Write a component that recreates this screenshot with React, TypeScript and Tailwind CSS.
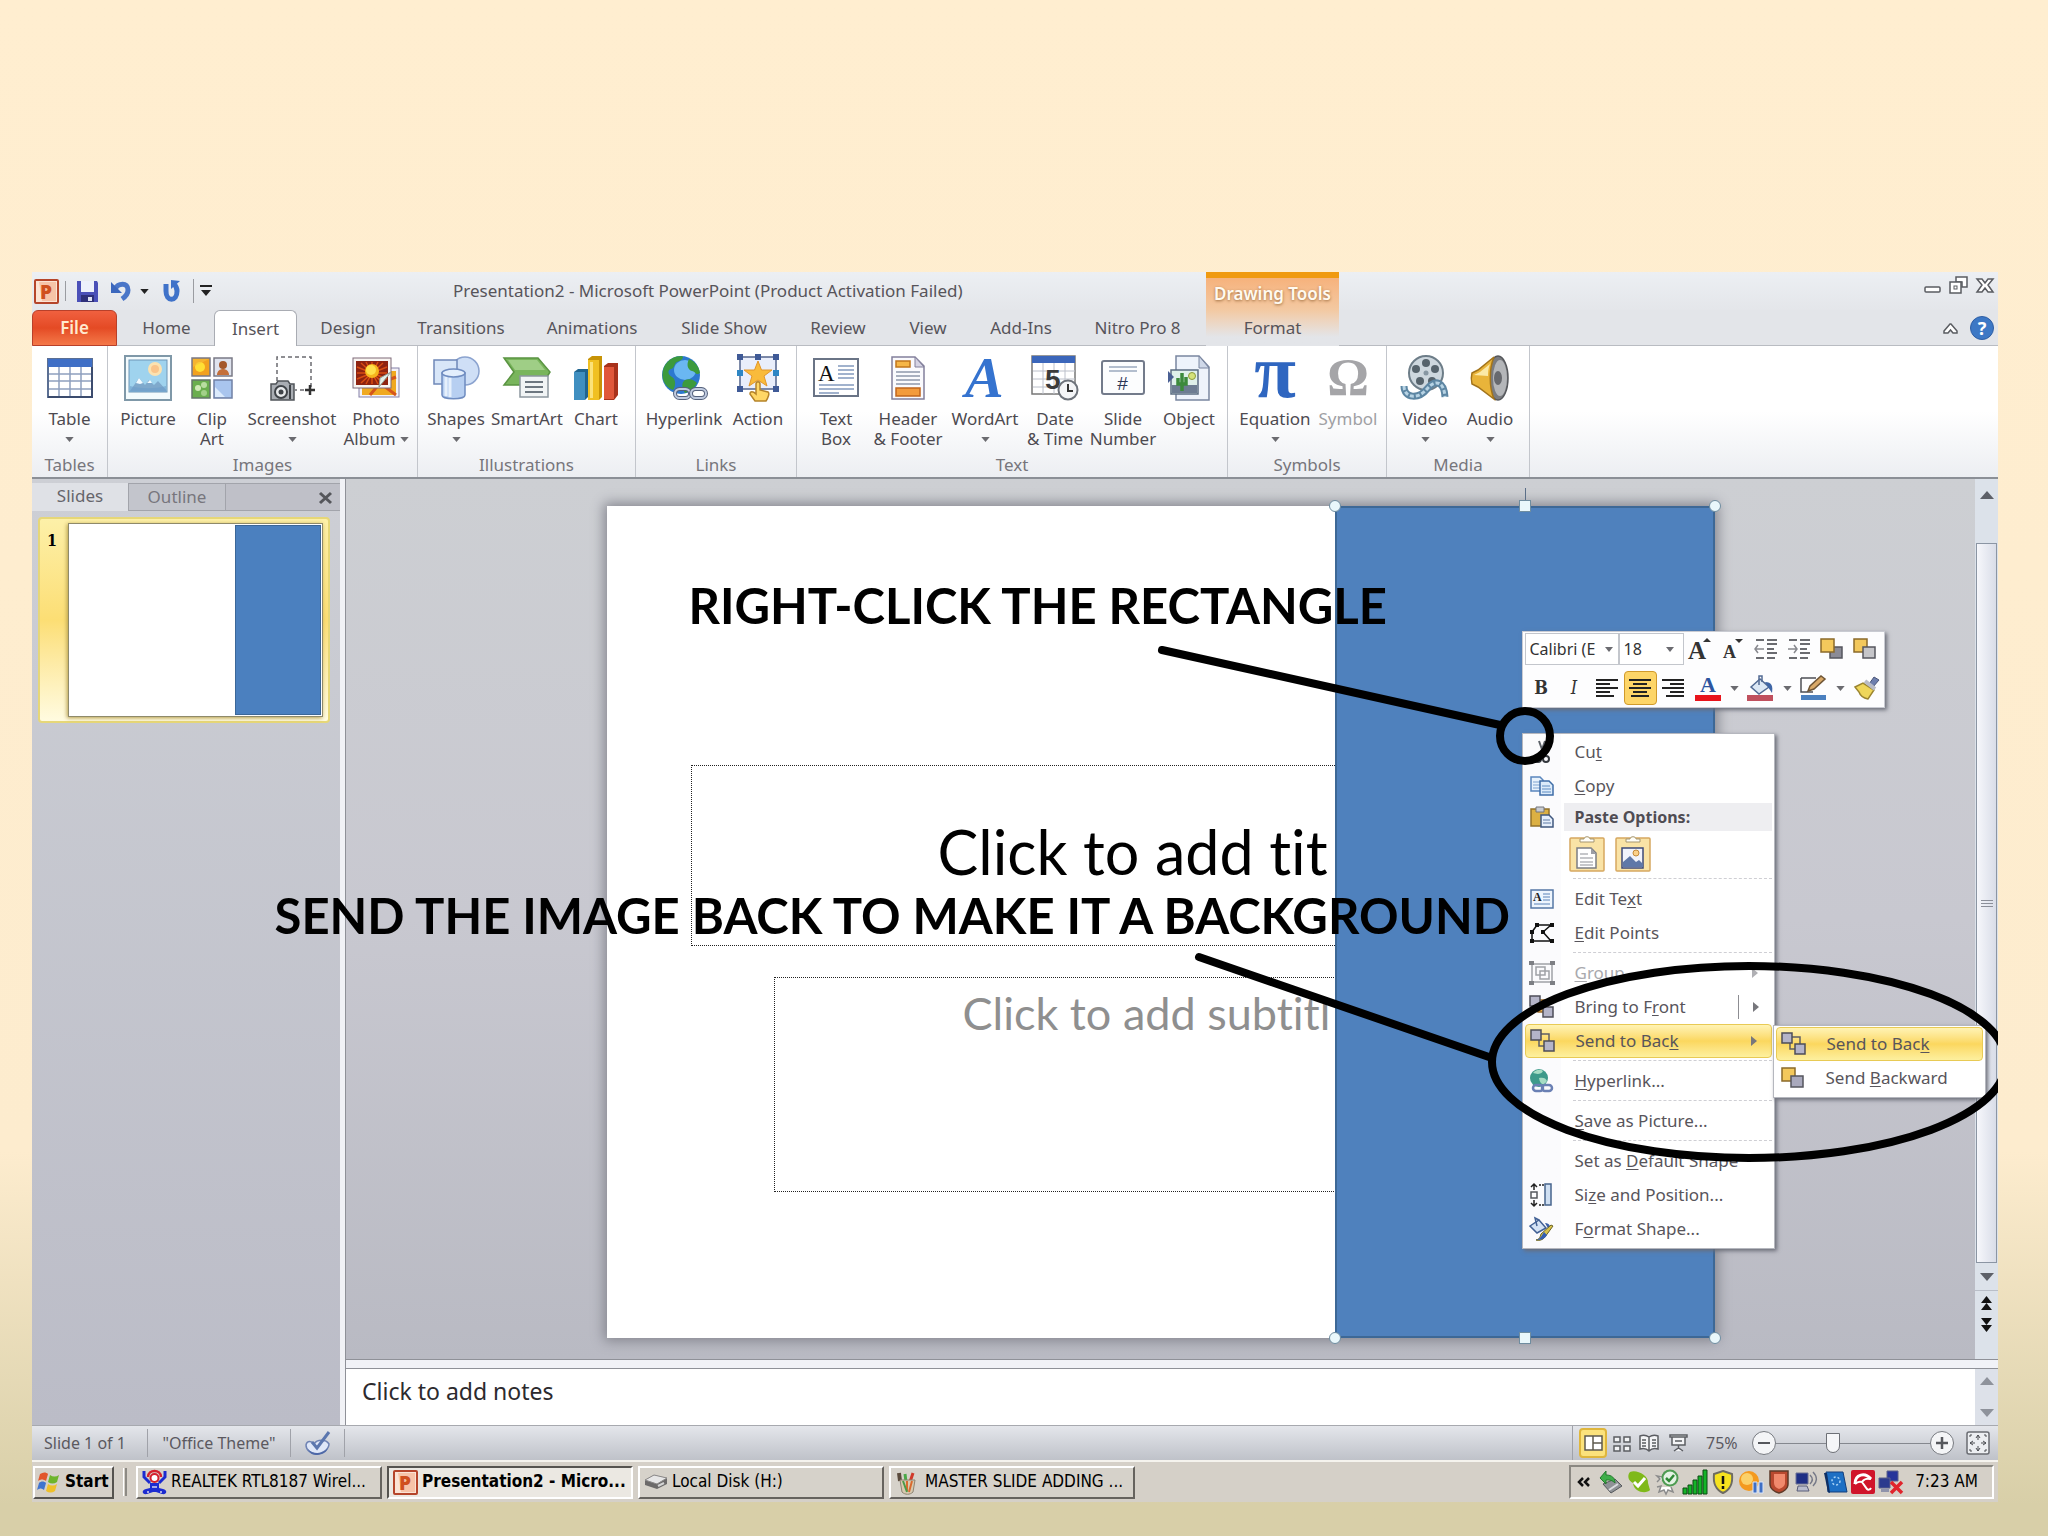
import React from "react";

type Kids = { children?: React.ReactNode };

function Icon({ w = 44, h, vw, vh, children }: Kids & { w?: number; h?: number; vw?: number; vh?: number }) {
  const hh = h ?? w;
  return (
    <svg width={w} height={hh} viewBox={`0 0 ${vw ?? w} ${vh ?? hh}`} aria-hidden="true" className="shrink-0 overflow-visible">
      {children}
    </svg>
  );
}

/** Label whose access key (the letter after "_") is underlined. */
function Keyed({ text }: { text: string }) {
  const i = text.indexOf("_");
  if (i < 0) return <span>{text}</span>;
  return (
    <span>
      {text.slice(0, i)}
      <span className="underline underline-offset-2">{text[i + 1]}</span>
      {text.slice(i + 2)}
    </span>
  );
}

function Down({ color = "#6b6b70", w = 9 }: { color?: string; w?: number }) {
  return (
    <svg width={w} height="5" viewBox="0 0 10 6" aria-hidden="true" className="shrink-0">
      <path d="M0 0h10L5 6z" fill={color} />
    </svg>
  );
}

/* ---------- large ribbon icons ---------- */

const TableIcon = (
  <Icon w={46} h={40}>
    <rect x="1" y="1" width="44" height="38" fill="#fff" stroke="#5b6f93" strokeWidth="2" />
    <rect x="1" y="1" width="44" height="8" fill="#3f6fc6" />
    <path d="M2 16h42M2 23h42M2 31h42M12 9v29M23 9v29M34 9v29" stroke="#8fa0bf" strokeWidth="1.5" />
    <path d="M1 39h44V9" fill="none" stroke="#3c4c6e" strokeWidth="2" />
  </Icon>
);
const PictureIcon = (
  <Icon w={48} h={46}>
    <rect x="1" y="1" width="46" height="44" fill="#f4fbfd" stroke="#7f98a8" strokeWidth="2" />
    <rect x="5" y="5" width="38" height="32" fill="#9fd3ee" stroke="#6f95b5" />
    <circle cx="31" cy="14" r="7" fill="#fbe2b0" />
    <circle cx="31" cy="14" r="4" fill="#f9c48a" />
    <path d="M6 36l9-13 6 7 4-5 5 5 4-4 9 10z" fill="#7fa9cc" />
    <path d="M12 28l3-5 4 5-3 1zM23 28l3-3 2 3z" fill="#f3fbff" />
    <path d="M6 37h36v-6c-12 3-24 3-36 0z" fill="#6d9fc9" opacity=".6" />
  </Icon>
);
const ClipArtIcon = (
  <Icon w={42} h={42}>
    <rect x="1" y="1" width="18" height="18" fill="#f2a11f" stroke="#7a7a86" strokeWidth="1.5" />
    <circle cx="9" cy="10" r="5" fill="#ffdf35" />
    <path d="M2 2h16L2 10z" fill="#f7c13c" opacity=".6" />
    <rect x="23" y="1" width="18" height="18" fill="#dfe3ee" stroke="#7a7a86" strokeWidth="1.5" />
    <circle cx="32" cy="8" r="4" fill="#a4572a" />
    <path d="M26 18c0-8 12-8 12 0z" fill="#c4703a" />
    <rect x="1" y="23" width="18" height="18" fill="#6aae4e" stroke="#64766a" strokeWidth="1.5" />
    <circle cx="7" cy="31" r="3" fill="#cfe9b6" />
    <circle cx="13" cy="28" r="3" fill="#b8dda0" />
    <circle cx="13" cy="36" r="3" fill="#a3d089" />
    <rect x="23" y="23" width="18" height="18" fill="#a9c5ee" stroke="#7080a5" strokeWidth="1.5" />
    <path d="M24 40V30l10 10z" fill="#dcebfc" />
  </Icon>
);
const ScreenshotIcon = (
  <Icon w={46} h={46}>
    <path d="M8 26V2h34v30M42 35H26" fill="none" stroke="#6b6b70" strokeWidth="1.5" strokeDasharray="4 3" />
    <path d="M36 35h10M41 30v10" stroke="#333" strokeWidth="2.5" />
    <path d="M2 29h5l2-3h10l2 3h4v16H2z" fill="#a9adb3" stroke="#505459" strokeWidth="1.5" />
    <circle cx="12" cy="37" r="6" fill="#e8eaec" stroke="#3f4348" strokeWidth="2" />
    <circle cx="12" cy="37" r="2.5" fill="#3f4348" />
    <path d="M21 30v14" stroke="#3f4348" strokeWidth="2" />
  </Icon>
);
const PhotoAlbumIcon = (
  <Icon w={48} h={42}>
    <rect x="7" y="11" width="40" height="29" fill="#f3f1f6" stroke="#8480a8" />
    <rect x="10" y="14" width="34" height="24" fill="#f0a920" />
    <path d="M18 38l10-12 16 12M28 26l16-6" stroke="#d5551b" strokeWidth="3" fill="none" />
    <rect x="1" y="1" width="38" height="30" fill="#f8f5f2" stroke="#7e6a78" />
    <rect x="4" y="4" width="32" height="24" fill="#8e2310" />
    <path d="M20 5v22M5 16h30M9 6l22 20M31 6L9 26M14 5l12 22M26 5L14 27M5 10l30 12M35 10L5 22" stroke="#d84c12" strokeWidth="1.5" />
    <circle cx="20" cy="14" r="7" fill="#f6b41c" />
    <circle cx="19" cy="13" r="5" fill="#ffe04a" />
    <path d="M39 15L27 30l1-9z" fill="#e4efe8" stroke="#8d9a94" />
  </Icon>
);
const ShapesIcon = (
  <Icon w={48} h={44}>
    <circle cx="33" cy="15" r="14" fill="#cfdff6" stroke="#8ba3cf" strokeWidth="1.5" />
    <rect x="2" y="4" width="23" height="24" fill="#d8e6f8" stroke="#6f88b8" strokeWidth="1.5" />
    <path d="M10 17v22c0 5 23 5 23 0V17z" fill="#b7cff1" stroke="#6f8cc0" strokeWidth="1.5" />
    <path d="M14 20v20M18 21v20" stroke="#e6f0fc" strokeWidth="3" />
    <ellipse cx="21.5" cy="17" rx="11.5" ry="4" fill="#e3eefc" stroke="#6f8cc0" strokeWidth="1.5" />
  </Icon>
);
const SmartArtIcon = (
  <Icon w={50} h={42}>
    <path d="M2 1h34l12 14-8 13H2l10-13z" fill="#79b55c" stroke="#5a9442" strokeWidth="1.5" />
    <path d="M6 3h29l8 10H13z" fill="#9fce86" />
    <rect x="18" y="19" width="28" height="21" fill="#f1f4f5" stroke="#8c979e" strokeWidth="1.5" />
    <path d="M23 25h18M23 30h18M23 35h18" stroke="#6d7780" strokeWidth="2" />
  </Icon>
);
const ChartIcon = (
  <Icon w={46} h={46}>
    <path d="M1 17l4-3h10v28l-3 3H1z" fill="#1f648f" />
    <path d="M1 17h11v28H1z" fill="#3f8fc0" />
    <path d="M31 11l4-3h10v32l-4 5H31z" fill="#a8321b" />
    <path d="M31 12h10v32H31z" fill="#e0573a" />
    <path d="M15 4l4-3h10v41l-3 3H15z" fill="#c79306" />
    <path d="M15 5h11v40H15z" fill="#f0c022" />
    <path d="M17 7h3v36h-3z" fill="#fbe27a" />
  </Icon>
);
const HyperlinkIcon = (
  <Icon w={48} h={46}>
    <circle cx="21" cy="20" r="19" fill="#2c78cf" />
    <ellipse cx="25" cy="15" rx="11" ry="10" fill="#6ab7f2" />
    <path d="M4 12C8 4 15 1 22 1c3 2-2 5-5 6s-2 6-6 7-3 6 1 8 4 9 1 13C4 32 0 22 4 12zM29 4c7 3 10 8 11 14-4 3-4-1-8-2s-6-6-3-12zM25 25c5-2 9 0 12 3-3 6-8 9-12 10-3-5-4-10 0-13z" fill="#3c9a3c" />
    <rect x="15" y="34" width="15" height="9" rx="4.5" fill="none" stroke="#55617c" strokeWidth="4" />
    <rect x="15" y="34" width="15" height="9" rx="4.5" fill="none" stroke="#c0cbe0" strokeWidth="2" />
    <rect x="31" y="34" width="15" height="9" rx="4.5" fill="none" stroke="#55617c" strokeWidth="4" />
    <rect x="31" y="34" width="15" height="9" rx="4.5" fill="none" stroke="#c0cbe0" strokeWidth="2" />
  </Icon>
);
const ActionIcon = (
  <Icon w={44} h={48}>
    <rect x="4" y="3" width="36" height="32" fill="#e9eefb" stroke="#53648c" strokeWidth="1.5" />
    <path d="M22 7l3.500 9H36l-8 6 3 10-9-6-9 6 3-10-8-6h10.500z" fill="#f9bb3b" stroke="#e2962a" />
    <g fill="#3f5a97">
      <path d="M1 0h6v6H1zM19 0h6v6h-6zM37 0h6v6h-6z" />
      <path d="M1 32h6v6H1zM37 32h6v6h-6z" />
    </g>
    <path d="M1 16h6v6H1zM37 16h6v6h-6z" fill="#2e86c4" />
    <path d="M20 30c0-3 4-3 4 0v6l8 2c2 1 0 6-2 9H19l-5-7c0-3 3-3 6 0z" fill="#ffd766" stroke="#b5842a" strokeWidth="1.5" />
  </Icon>
);
const TextBoxIcon = (
  <Icon w={46} h={40}>
    <rect x="1" y="1" width="44" height="37" fill="#fff" stroke="#6a7486" strokeWidth="2" />
    <text x="5" y="23" fontFamily="Liberation Serif, serif" fontSize="23" fill="#111">A</text>
    <path d="M25 8h16M25 12h16M25 16h16M25 20h16M6 27h35M6 31h35M6 35h20" stroke="#8299bd" strokeWidth="1.5" />
  </Icon>
);
const HeaderIcon = (
  <Icon w={34} h={44}>
    <path d="M1 1h23l9 9v33H1z" fill="#fafafd" stroke="#83809c" strokeWidth="1.5" />
    <path d="M24 1l9 10h-9z" fill="#d6d4e4" stroke="#83809c" />
    <rect x="5" y="5" width="14" height="6" fill="#f6b648" stroke="#c1761d" strokeWidth="1.5" />
    <rect x="5" y="32" width="24" height="8" fill="#f39b3c" stroke="#c1661d" strokeWidth="1.5" />
    <path d="M5 16h24M5 20h24M5 24h24M5 28h24" stroke="#8f98ab" strokeWidth="1.5" />
  </Icon>
);
const WordArtIcon = (
  <Icon w={42} h={46}>
    <text x="1" y="42" fontFamily="Liberation Serif, serif" fontSize="58" fontStyle="italic" fontWeight="700" fill="#3573cf">A</text>
  </Icon>
);
const DateIcon = (
  <Icon w={48} h={46}>
    <rect x="1" y="1" width="43" height="38" fill="#fff" stroke="#777" strokeWidth="1.5" />
    <rect x="1" y="1" width="43" height="7" fill="#3b66ba" />
    <path d="M2 16h42M2 24h42M2 32h42M12 8v31M23 8v31M34 8v31" stroke="#bcc0ca" />
    <text x="14" y="34" fontFamily="Liberation Sans, sans-serif" fontSize="28" fontWeight="700" fill="#3b3b3b">5</text>
    <circle cx="37" cy="35" r="9.500" fill="#f4f5f7" stroke="#6e737b" strokeWidth="2" />
    <path d="M37 29v7h5" fill="none" stroke="#333" strokeWidth="2" />
  </Icon>
);
const SlideNumberIcon = (
  <Icon w={44} h={36}>
    <rect x="1" y="1" width="42" height="33" rx="2" fill="#fcfdfe" stroke="#737b8b" strokeWidth="2" />
    <path d="M8 7h28M8 11h28" stroke="#9aa9bf" strokeWidth="1.5" />
    <text x="16" y="30" fontFamily="Liberation Sans, sans-serif" fontSize="19" fontStyle="italic" fill="#2c3857">#</text>
  </Icon>
);
const ObjectIcon = (
  <Icon w={42} h={46}>
    <path d="M8 1h23l10 11v33H8z" fill="#eef3fb" stroke="#7a86a0" strokeWidth="1.5" />
    <path d="M31 1l10 12H31z" fill="#cfd8e8" stroke="#7a86a0" />
    <rect x="3" y="15" width="27" height="24" fill="#dff0ea" stroke="#5c6d82" strokeWidth="1.5" />
    <path d="M4 30h25v8H4z" fill="#6d7c92" />
    <path d="M14 36V18M10 23v6h8v-7" stroke="#3c8a3c" strokeWidth="3.500" fill="none" />
    <circle cx="24" cy="21" r="3.500" fill="#d4e27a" stroke="#8d9b3a" />
    <path d="M0 16l6 6-6 6z" fill="#4a5f93" />
  </Icon>
);
const EquationIcon = (
  <Icon w={42} h={42}>
    <text x="21" y="40" textAnchor="middle" fontFamily="Liberation Serif, serif" fontSize="76" fontWeight="700" fill="#2f66c0">π</text>
  </Icon>
);
const SymbolIcon = (
  <Icon w={42} h={38}>
    <text x="21" y="36" textAnchor="middle" fontFamily="Liberation Serif, serif" fontSize="52" fontWeight="700" fill="#a5a5a8">Ω</text>
  </Icon>
);
const VideoIcon = (
  <Icon w={48} h={46}>
    <circle cx="25" cy="18" r="17" fill="#cdd7de" stroke="#6d7d88" strokeWidth="2" />
    <g fill="#56636c">
      <circle cx="25" cy="8" r="4" />
      <circle cx="34" cy="14" r="4" />
      <circle cx="31" cy="26" r="4" />
      <circle cx="19" cy="26" r="4" />
      <circle cx="15" cy="14" r="4" />
    </g>
    <circle cx="25" cy="18" r="2.500" fill="#8797a3" />
    <path d="M3 31c0 13 15 13 23 3s17-8 18 8" fill="none" stroke="#5d86a3" strokeWidth="7" />
    <path d="M3 31c0 13 15 13 23 3s17-8 18 8" fill="none" stroke="#b7d3e4" strokeWidth="3" strokeDasharray="4 2" />
  </Icon>
);
const AudioIcon = (
  <Icon w={40} h={46}>
    <ellipse cx="28" cy="23" rx="10" ry="22" fill="#7a7c80" stroke="#55575b" strokeWidth="1.500" />
    <ellipse cx="30" cy="23" rx="7" ry="18" fill="#b4b6b9" />
    <ellipse cx="28" cy="23" rx="4" ry="7" fill="#67696e" />
    <path d="M2 18l6-3L24 2c-5 12-5 30 0 42L8 32l-6-3c-1-4-1-7 0-11z" fill="#e9b43a" stroke="#a2741c" strokeWidth="1.500" />
    <path d="M4 20l6-3L20 9c-2 5-2 9-2 12z" fill="#fbe9a8" />
  </Icon>
);

/* ---------- ribbon ---------- */

type Tool = { icon: React.ReactNode; a: string; b?: string; arrow?: boolean; w: string; off?: boolean };
type Group = { name: string; w: string; pad: string; tools: Tool[] };

const groups: Group[] = [
  { name: "Tables", w: "w-[76px]", pad: "pl-0", tools: [{ icon: TableIcon, a: "Table", arrow: true, w: "w-[75px]" }] },
  {
    name: "Images",
    w: "w-[310px]",
    pad: "pl-1",
    tools: [
      { icon: PictureIcon, a: "Picture", w: "w-[72px]" },
      { icon: ClipArtIcon, a: "Clip", b: "Art", w: "w-[56px]" },
      { icon: ScreenshotIcon, a: "Screenshot", arrow: true, w: "w-[104px]" },
      { icon: PhotoAlbumIcon, a: "Photo", b: "Album", arrow: true, w: "w-[64px]" },
    ],
  },
  {
    name: "Illustrations",
    w: "w-[218px]",
    pad: "pl-[3px]",
    tools: [
      { icon: ShapesIcon, a: "Shapes", arrow: true, w: "w-[70px]" },
      { icon: SmartArtIcon, a: "SmartArt", w: "w-[72px]" },
      { icon: ChartIcon, a: "Chart", w: "w-[66px]" },
    ],
  },
  {
    name: "Links",
    w: "w-[161px]",
    pad: "pl-1",
    tools: [
      { icon: HyperlinkIcon, a: "Hyperlink", w: "w-[88px]" },
      { icon: ActionIcon, a: "Action", w: "w-[60px]" },
    ],
  },
  {
    name: "Text",
    w: "w-[431px]",
    pad: "pl-1",
    tools: [
      { icon: TextBoxIcon, a: "Text", b: "Box", w: "w-[70px]" },
      { icon: HeaderIcon, a: "Header", b: "& Footer", w: "w-[74px]" },
      { icon: WordArtIcon, a: "WordArt", arrow: true, w: "w-[80px]" },
      { icon: DateIcon, a: "Date", b: "& Time", w: "w-[60px]" },
      { icon: SlideNumberIcon, a: "Slide", b: "Number", w: "w-[76px]" },
      { icon: ObjectIcon, a: "Object", w: "w-[56px]" },
    ],
  },
  {
    name: "Symbols",
    w: "w-[159px]",
    pad: "pl-2",
    tools: [
      { icon: EquationIcon, a: "Equation", arrow: true, w: "w-[78px]" },
      { icon: SymbolIcon, a: "Symbol", w: "w-[68px]", off: true },
    ],
  },
  {
    name: "Media",
    w: "w-[143px]",
    pad: "pl-1",
    tools: [
      { icon: VideoIcon, a: "Video", arrow: true, w: "w-[68px]" },
      { icon: AudioIcon, a: "Audio", arrow: true, w: "w-[62px]" },
    ],
  },
];

function Ribbon() {
  return (
    <div className="flex border-b-2 border-[#8b8f96] bg-linear-to-b from-white from-50% to-[#eceef2]">
      {groups.map((g) => (
        <section key={g.name} aria-label={g.name} className={`flex shrink-0 flex-col border-r border-[#c3c6cc] ${g.w}`}>
          <div className={`flex pt-[9px] ${g.pad}`}>
            {g.tools.map((t) => (
              <button key={t.a} type="button" className={`flex shrink-0 flex-col items-center leading-5 whitespace-nowrap ${t.w} ${t.off ? "text-[#a0a0a4]" : "text-[#4d4a50]"}`}>
                <span className="mb-2 flex h-[46px] items-center">{t.icon}</span>
                <span>{t.a}</span>
                <span className="flex h-5 items-center gap-1">
                  {t.b}
                  {t.arrow && <Down />}
                </span>
              </button>
            ))}
          </div>
          <h2 className="mt-1 text-center leading-6 text-[#77767c]">{g.name}</h2>
        </section>
      ))}
    </div>
  );
}

/* ---------- title bar and tabs ---------- */

function PowerPointIcon() {
  return (
    <Icon w={25} h={25}>
      <rect x="1" y="1" width="23" height="23" rx="1" fill="#fbe3d4" stroke="#b5452a" strokeWidth="2" />
      <path d="M5 3h17v19H8z" fill="#f7c4a8" />
      <text x="6" y="20" fontFamily="Open Sans, sans-serif" fontSize="19" fontWeight="800" fill="#d0501e">P</text>
    </Icon>
  );
}

function TitleBar() {
  return (
    <header className="flex h-[38px] bg-linear-to-b from-[#eceff3] to-[#e4e6ea]">
      <div className="flex w-[421px] shrink-0 items-center pl-0.5">
        <PowerPointIcon />
        <span className="ml-1.5 h-5 w-px bg-[#9a9ca1]" />
        <button type="button" aria-label="Save" className="ml-2.5">
          <Icon w={23} h={23}>
            <path d="M1 1h20l1 2v19H1z" fill="#4b50b8" />
            <path d="M5 1h13v11H5z" fill="#eef1fb" />
            <path d="M5 15h13v7H5z" fill="#2f307a" />
            <path d="M12 17h4v4h-4z" fill="#dfe2f2" />
          </Icon>
        </button>
        <button type="button" aria-label="Undo" className="ml-3">
          <Icon w={21} h={22}>
            <path d="M4 9c3-6 13-7 13 1 0 4-3 7-6 9" fill="none" stroke="#4a76c8" strokeWidth="5" />
            <path d="M0 2v11h11z" fill="#3b67bd" />
          </Icon>
        </button>
        <button type="button" aria-label="Undo list" className="ml-2">
          <Down color="#222" />
        </button>
        <button type="button" aria-label="Repeat" className="ml-3">
          <Icon w={20} h={22}>
            <path d="M5 4v7c0 11 11 11 11 0 0-3-1-5-3-7" fill="none" stroke="#3f72c9" strokeWidth="5" />
            <path d="M10 0v9l9-8z" fill="#3f72c9" />
          </Icon>
        </button>
        <span className="ml-3 h-6 w-px bg-[#9a9ca1]" />
        <button type="button" aria-label="Customize Quick Access Toolbar" className="ml-1.5">
          <Icon w={12} h={12}>
            <path d="M0 0h12v2H0zM1 5h10l-5 6z" fill="#222" />
          </Icon>
        </button>
      </div>
      <h1 className="flex w-[753px] shrink-0 items-center whitespace-nowrap text-[#57545a]">
        Presentation2 - Microsoft PowerPoint (Product Activation Failed)
      </h1>
      <div className="flex w-[133px] shrink-0 items-center justify-center border-t-[6px] border-[#f09a10] bg-linear-to-b from-[#f6b27c] to-[#f3c9a2] font-semibold whitespace-nowrap text-[#fffaf0] [text-shadow:0_1px_3px_#9a6a3c]">
        Drawing Tools
      </div>
      <div className="flex flex-1 items-start justify-end gap-2 pt-1 pr-1">
        <button type="button" aria-label="Minimize" className="pt-2.5">
          <Icon w={17} h={8}>
            <rect x="1" y="1" width="15" height="5" rx="1" fill="#fff" stroke="#5a5c61" strokeWidth="1.5" />
          </Icon>
        </button>
        <button type="button" aria-label="Restore">
          <Icon w={19} h={18}>
            <path d="M7 1h11v10h-5V6H7z" fill="#fff" stroke="#5a5c61" strokeWidth="1.5" />
            <rect x="1" y="6" width="11" height="11" fill="#fff" stroke="#5a5c61" strokeWidth="1.5" />
            <rect x="5" y="10" width="3" height="3" fill="none" stroke="#5a5c61" />
          </Icon>
        </button>
        <button type="button" aria-label="Close" className="pt-0.5">
          <Icon w={18} h={15}>
            <path d="M1 1h5l3 4 3-4h5l-5 6 5 7h-5l-3-4-3 4H1l5-7z" fill="#fff" stroke="#5a5c61" strokeWidth="1.500" />
          </Icon>
        </button>
      </div>
    </header>
  );
}

const tabs: [string, string][] = [
  ["Home", "w-[83px] ml-2 mr-1.5"],
  ["Insert", "w-[83px]"],
  ["Design", "w-[102px]"],
  ["Transitions", "w-[124px]"],
  ["Animations", "w-[138px]"],
  ["Slide Show", "w-[126px]"],
  ["Review", "w-[102px]"],
  ["View", "w-[78px]"],
  ["Add-Ins", "w-[108px]"],
  ["Nitro Pro 8", "w-[125px] mr-1.5"],
];

function Tabs() {
  return (
    <nav aria-label="Ribbon tabs" className="flex h-9 bg-[#e3e5e9] text-[#57545a] shadow-[inset_0_-1px_0_#b9bcc2]">
      <button type="button" className="w-[85px] shrink-0 rounded-t-md border border-[#b8402a] bg-linear-to-b from-[#f0603f] via-[#e44a24] to-[#f47848] font-semibold text-[#ffe9cf]">
        File
      </button>
      {tabs.map(([t, w]) => (
        <button key={t} type="button" className={`shrink-0 whitespace-nowrap ${w} ${t === "Insert" ? "rounded-t-md border-x border-t border-[#a9acb3] bg-white" : ""}`}>
          {t}
        </button>
      ))}
      <button type="button" className="w-[133px] shrink-0 bg-linear-to-b from-[#f3c9a2] to-[#e3e5e9] to-75%">
        Format
      </button>
      <div className="flex flex-1 items-center justify-end gap-3 pr-1">
        <button type="button" aria-label="Minimize the Ribbon">
          <Icon w={15} h={11}>
            <path d="M1 8l6-7h1l6 7v2h-4L7.500 7 5 10H1z" fill="#fff" stroke="#5a5c61" strokeWidth="1.500" />
          </Icon>
        </button>
        <button type="button" aria-label="Help" className="size-6 rounded-full border border-[#2f5fa5] bg-[#3d78c5] text-lg leading-none font-bold text-white">
          ?
        </button>
      </div>
    </nav>
  );
}

/* ---------- slides pane ---------- */

function SlidesPane() {
  return (
    <aside className="flex w-[308px] shrink-0 flex-col bg-linear-to-b from-[#cdcfd5] to-[#bbbcc7]">
      <div className="mt-1 flex h-7 text-[#66656b]">
        <button type="button" className="w-24 bg-[#dfe1e6] pb-0.5">Slides</button>
        <button type="button" className="w-[98px] border border-[#a2a4ab] bg-[#c3c5cc] pb-0.5 text-[#77767d]">Outline</button>
        <div className="flex flex-1 items-center justify-end border-y border-[#a2a4ab] bg-[#bfc0c8] pr-2">
          <button type="button" aria-label="Close pane">
            <Icon w={13} h={13}>
              <path d="M1 2l11 10M12 2L1 12" stroke="#55565b" strokeWidth="3" />
            </Icon>
          </button>
        </div>
      </div>
      <button type="button" aria-label="Slide 1" className="mx-1.5 mt-1.5 flex w-[292px] rounded border-2 border-[#e6d778] bg-linear-to-b from-[#fdf0a8] via-[#fcde74] to-[#fffbe0] p-1 pr-[5px] text-black">
        <span className="w-6 pt-2 pr-2 text-center font-['DejaVu_Serif_Condensed','DejaVu_Serif',serif] text-base leading-5 font-bold">1</span>
        <span className="flex h-[194px] flex-1 justify-end border border-[#8f8a6a] bg-white p-px shadow-[-1px_1px_4px_#b39a48]">
          <span className="w-[86px] border border-[#3b6798] bg-[#4b80bf]" />
        </span>
      </button>
    </aside>
  );
}

/* ---------- mini toolbar ---------- */

function Lines({ xs }: { xs: [number, number][] }) {
  return (
    <Icon w={22} h={20}>
      {xs.map(([a, b], i) => (
        <path key={i} d={`M${a} ${2 + i * 4}H${b}`} stroke="#222" strokeWidth="2" />
      ))}
    </Icon>
  );
}

function Stack({ back = "#8b8b96", flip = false }: { back?: string; flip?: boolean }) {
  const a = <rect x="1" y="1" width="13" height="13" fill="#f3c85c" stroke="#8b6a2a" strokeWidth="1.5" />;
  const b = <rect x="10" y="9" width="12" height="11" fill={back} stroke="#55565e" strokeWidth="1.5" />;
  return (
    <Icon w={24} h={22}>
      {flip ? a : b}
      {flip ? b : a}
    </Icon>
  );
}

function Steps({ mid }: { mid: boolean }) {
  return (
    <Icon w={26} h={24}>
      <path d="M9 5h10v12H9z" fill={mid ? "#f0b24a" : "none"} stroke={mid ? "#9b6a2a" : "#5f5f66"} strokeWidth="1.5" />
      <rect x="1" y="1" width="10" height="10" fill="#b4b4c8" stroke="#4d4d58" strokeWidth="1.500" />
      <rect x="14" y="12" width="10" height="10" fill="#b4b4c8" stroke="#4d4d58" strokeWidth="1.5" />
    </Icon>
  );
}

function IndentIcon({ flip }: { flip?: boolean }) {
  return (
    <Icon w={24} h={22}>
      <path d="M2 2h8M2 20h8M13 2h10M13 6h10M13 11h7M13 15h10M13 20h8" stroke="#6a6b70" strokeWidth="2" />
      <path d={flip ? "M1 11h9M7 7l3 4-3 4" : "M10 11H1M4 7l-3 4 3 4"} fill="none" stroke="#88898f" strokeWidth="1.500" />
    </Icon>
  );
}

function MiniButton({ label, on, children }: Kids & { label: string; on?: boolean }) {
  return (
    <button type="button" aria-label={label} className={`flex h-[34px] w-[33px] shrink-0 items-center justify-center rounded ${on ? "border border-[#d09a2c] bg-[#fdd568]" : ""}`}>
      {children}
    </button>
  );
}

function MiniArrow({ label }: { label: string }) {
  return (
    <button type="button" aria-label={label} className="flex w-5 shrink-0 items-center justify-center">
      <Down />
    </button>
  );
}

function MiniToolbar() {
  return (
    <div role="toolbar" aria-label="Mini toolbar" className="absolute top-[125px] left-[915px] z-20 flex w-[363px] flex-col gap-1.5 border border-[#c9cbd2] bg-[#fdfdfe] pt-px pb-0.5 pl-0.5 text-[#333] shadow-[2px_2px_4px_#6b6d78]">
      <div className="flex h-8 items-center">
        <span className="relative flex items-center">
          <select aria-label="Font" className="h-8 w-[94px] appearance-none border border-[#c3c6cc] bg-white pl-1 text-base">
            <option>Calibri (E</option>
          </select>
          <span className="pointer-events-none absolute right-1.5 bg-white pl-0.5"><Down w={8} /></span>
        </span>
        <span className="relative flex items-center">
          <select aria-label="Font size" className="h-8 w-[65px] appearance-none border border-[#c3c6cc] bg-white pl-1 text-base">
            <option>18</option>
          </select>
          <span className="pointer-events-none absolute right-2.5"><Down w={8} /></span>
        </span>
        <MiniButton label="Grow font">
          <Icon w={24} h={24}>
            <text x="0" y="22" fontFamily="Liberation Serif, serif" fontSize="25" fontWeight="700" fill="#333">A</text>
            <path d="M15 5h8l-4-4z" fill="#333" />
          </Icon>
        </MiniButton>
        <MiniButton label="Shrink font">
          <Icon w={22} h={24}>
            <text x="1" y="21" fontFamily="Liberation Serif, serif" fontSize="18" fontWeight="700" fill="#333">A</text>
            <path d="M13 2h8l-4 4z" fill="#333" />
          </Icon>
        </MiniButton>
        <MiniButton label="Decrease indent"><IndentIcon /></MiniButton>
        <MiniButton label="Increase indent"><IndentIcon flip /></MiniButton>
        <MiniButton label="Bring forward"><Stack /></MiniButton>
        <MiniButton label="Send backward"><Stack flip back="#c5c5c9" /></MiniButton>
      </div>
      <div className="flex h-[34px] items-center">
        <MiniButton label="Bold"><span className="font-['DejaVu_Serif_Condensed','DejaVu_Serif',serif] text-lg font-bold">B</span></MiniButton>
        <MiniButton label="Italic"><span className="font-['DejaVu_Serif_Condensed','DejaVu_Serif',serif] text-lg italic">I</span></MiniButton>
        <MiniButton label="Align left"><Lines xs={[[0, 22], [0, 14], [0, 22], [0, 14], [0, 18]]} /></MiniButton>
        <MiniButton label="Center" on><Lines xs={[[0, 22], [4, 18], [0, 22], [4, 18], [2, 20]]} /></MiniButton>
        <MiniButton label="Align right"><Lines xs={[[0, 22], [8, 22], [0, 22], [8, 22], [4, 22]]} /></MiniButton>
        <span className="w-0.5" />
        <MiniButton label="Font color">
          <Icon w={26} h={26}>
            <text x="5" y="17" fontFamily="Liberation Serif, serif" fontSize="22" fontWeight="700" fill="#2d559f">A</text>
            <path d="M0 20h26v6H0z" fill="#e8141c" />
          </Icon>
        </MiniButton>
        <MiniArrow label="Font color list" />
        <MiniButton label="Shape fill">
          <Icon w={28} h={26}>
            <path d="M4 12L13 4l9 8-10 7z" fill="#dce8f5" stroke="#536b94" strokeWidth="1.500" />
            <path d="M12 10V1h3v6" fill="none" stroke="#536b94" strokeWidth="1.500" />
            <path d="M18 7c7 0 8 4 7 11l-4-6z" fill="#3f66a6" />
            <path d="M0 20h26v6H0z" fill="#c0505e" />
          </Icon>
        </MiniButton>
        <MiniArrow label="Shape fill list" />
        <MiniButton label="Shape outline">
          <Icon w={28} h={26}>
            <path d="M1 3h15M1 3v14h12" fill="none" stroke="#4d4f55" strokeWidth="1.500" />
            <path d="M8 16l2-5L21 1l4 3-11 10z" fill="#d9a968" stroke="#6f5535" strokeWidth="1.500" />
            <path d="M1 20h25v5H1z" fill="#4b80bf" />
          </Icon>
        </MiniButton>
        <MiniArrow label="Shape outline list" />
        <MiniButton label="Format painter">
          <Icon w={26} h={24}>
            <path d="M15 8l5-7 5 3-6 7z" fill="#6e7fae" stroke="#4a5577" />
            <path d="M1 11l8-4 11 7-6 9c-5-1-8-4-9-7z" fill="#efd65a" stroke="#9b8530" strokeWidth="1.500" />
            <path d="M11 5l10 8" stroke="#b8bbc6" strokeWidth="4" />
          </Icon>
        </MiniButton>
      </div>
    </div>
  );
}

/* ---------- context menu ---------- */

const CutIcon = (
  <Icon w={22} h={24}>
    <path d="M8 1l5 14M14 1L9 15" stroke="#5c6168" strokeWidth="2" />
    <circle cx="7" cy="19" r="3" fill="none" stroke="#33373d" strokeWidth="2" />
    <circle cx="15" cy="19" r="3" fill="none" stroke="#33373d" strokeWidth="2" />
  </Icon>
);
const CopyIcon = (
  <Icon w={24} h={20}>
    <path d="M1 1h9l3 3v11H1z" fill="#e8f2fc" stroke="#5b86bd" strokeWidth="1.500" />
    <path d="M3 6h7M3 9h7M3 12h7" stroke="#7fa3d0" />
    <path d="M10 5h9l4 4v10H10z" fill="#dcebfa" stroke="#3f6ea8" strokeWidth="1.500" />
    <path d="M12 10h8M12 13h9M12 16h9" stroke="#5f8cc2" />
  </Icon>
);
const PasteIcon = (
  <Icon w={25} h={22}>
    <rect x="1" y="3" width="18" height="17" fill="#dcb043" stroke="#93722a" strokeWidth="1.500" />
    <path d="M6 1h8v5H6z" fill="#c9ccd2" stroke="#73757b" />
    <path d="M11 9h8l4 4v8H11z" fill="#e6effb" stroke="#40587f" strokeWidth="1.500" />
    <path d="M13 14h7M13 17h8" stroke="#5f7aa5" />
  </Icon>
);
const EditTextIcon = (
  <Icon w={24} h={20}>
    <rect x="1" y="1" width="22" height="18" fill="#eef5fd" stroke="#5577a5" strokeWidth="1.5" />
    <text x="3" y="12" fontFamily="Liberation Serif, serif" fontSize="12" fontWeight="700" fill="#222">A</text>
    <path d="M13 5h7M13 8h7M13 11h7M4 15h16" stroke="#5b83b8" />
  </Icon>
);
const EditPointsIcon = (
  <Icon w={26} h={22}>
    <path d="M3 10L8 3h14L14 10l8 9H3z" fill="none" stroke="#111" strokeWidth="1.500" />
    <path d="M6 1h4v4H6zM21 1h4v4h-4zM12 8h4v4h-4zM1 8h4v4H1zM1 17h4v4H1zM21 17h4v4h-4z" fill="#111" />
  </Icon>
);
const GroupIcon = (
  <Icon w={26} h={24}>
    <path d="M3 3h20v18H3zM7 6h9v8H7zM11 10h9v8h-9z" fill="none" stroke="#a0a2a6" strokeWidth="1.500" />
    <path d="M0 0h5v4H0zM21 0h5v4h-5zM0 20h5v4H0zM21 20h5v4h-5z" fill="#7d7f84" />
  </Icon>
);
const LinkIcon = (
  <Icon w={25} h={26}>
    <circle cx="10" cy="10" r="9" fill="#3d9a8a" />
    <path d="M4 5c3-4 8-4 10-2-2 4-7 3-10 2zM10 10c4-1 7 0 8 3-3 5-7 4-8-3z" fill="#a6dcc4" />
    <rect x="4" y="17" width="10" height="6" rx="3" fill="none" stroke="#6a80b4" strokeWidth="2.500" />
    <rect x="13" y="17" width="10" height="6" rx="3" fill="none" stroke="#6a80b4" strokeWidth="2.500" />
  </Icon>
);
const SizeIcon = (
  <Icon w={24} h={24}>
    <path d="M4 1v6M1 4l3-3 3 3M4 23v-6M1 20l3 3 3-3" stroke="#222" strokeWidth="1.500" fill="none" />
    <path d="M1 9h6v6H1z" fill="none" stroke="#55585e" strokeWidth="1.5" />
    <path d="M9 2h5M9 22h5" stroke="#222" strokeWidth="1.500" strokeDasharray="2 1" />
    <rect x="15" y="1" width="6" height="21" fill="#cfdff2" stroke="#47648c" strokeWidth="1.5" />
  </Icon>
);
const FormatShapeIcon = (
  <Icon w={26} h={24}>
    <path d="M1 9l9-6 7 8-9 5z" fill="#d5e3f5" stroke="#426195" strokeWidth="1.500" />
    <path d="M8 9L6 1l4 2" fill="none" stroke="#426195" strokeWidth="1.500" />
    <path d="M16 6c5 0 6 4 4 7z" fill="#3b5fa5" />
    <path d="M24 9l-8 11c-2 3-6 4-9 3 4-1 4-3 5-6l10-9z" fill="#d9c34a" stroke="#6a6326" />
    <path d="M8 23c4 0 8-1 10-5l-3-3c-2 3-3 6-7 8z" fill="#335fb5" />
  </Icon>
);

function Tip({ dim }: { dim?: boolean }) {
  return (
    <svg width="6" height="10" viewBox="0 0 6 10" aria-hidden="true">
      <path d="M0 0l6 5-6 5z" fill={dim ? "#b0b0b4" : "#77777c"} />
    </svg>
  );
}

function MenuItem({ icon, text, on, off, sub, split }: { icon?: React.ReactNode; text: string; on?: boolean; off?: boolean; sub?: boolean; split?: boolean }) {
  return (
    <button
      type="button"
      role="menuitem"
      className={`flex h-[34px] w-full items-center whitespace-nowrap ${on ? "rounded border border-[#e8ca55] bg-linear-to-b from-[#fff3b4] via-[#fbd75e] to-[#fdf09e]" : ""} ${off ? "text-[#a9a9ad]" : "text-[#58555b]"}`}
    >
      <span className="flex w-[34px] shrink-0 justify-center">{icon}</span>
      <span className="flex-1 pl-4 text-left"><Keyed text={text} /></span>
      {sub && (
        <span className={`flex h-6 w-[34px] items-center pl-3.5 ${split ? "border-l border-[#8d8d92]" : ""}`}>
          <Tip dim={off} />
        </span>
      )}
    </button>
  );
}

function Rule() {
  return <div className="h-1.5 pl-12"><div className="border-b border-dashed border-[#cfcfd4] pt-0.5" /></div>;
}

function PasteChoice({ label, children }: Kids & { label: string }) {
  return (
    <button type="button" aria-label={label} className="h-9 w-9">
      <Icon w={36} h={36}>
        <rect x="1" y="2" width="34" height="33" rx="1" fill="#f9e3a6" stroke="#d6a860" strokeWidth="1.5" />
        <path d="M11 6V3h4c0-3 6-3 6 0h4v3z" fill="#fffef8" stroke="#a59670" />
        {children}
      </Icon>
    </button>
  );
}

function ContextMenu() {
  return (
    <div role="menu" aria-label="Shape menu" className="absolute top-[227px] left-[915px] z-10 w-[253px] border border-[#b5b7be] bg-linear-to-r from-[#fbfbfd] from-15% to-white to-15% p-0.5 pt-px shadow-[2px_2px_4px_#6b6d78]">
      <MenuItem icon={CutIcon} text="Cu_t" />
      <MenuItem icon={CopyIcon} text="_Copy" />
      <div className="flex h-7 items-center">
        <span className="flex w-[35px] shrink-0 justify-center">{PasteIcon}</span>
        <span className="ml-1 flex h-full flex-1 items-center bg-[#eeeef1] pl-[11px] text-base font-bold text-[#4f4c53]">Paste Options:</span>
      </div>
      <div className="flex h-[45px] items-center gap-2.5 pl-11">
        <PasteChoice label="Use destination theme">
          <path d="M8 12h14l5 5v15H8z" fill="#fff" stroke="#7b7d84" strokeWidth="1.5" />
          <path d="M22 12l5 6h-5z" fill="#9c9ea5" />
          <path d="M11 18h8M11 22h13M11 26h13M11 29h13" stroke="#8d8f96" />
        </PasteChoice>
        <PasteChoice label="Picture">
          <rect x="7" y="12" width="21" height="20" fill="#f1f3fb" stroke="#3d4a78" strokeWidth="1.5" />
          <circle cx="21" cy="17" r="3" fill="#fbd18a" stroke="#c48a3a" />
          <path d="M8 31v-5l7-6 6 6 3-2 4 4v3z" fill="#5f78a8" />
        </PasteChoice>
      </div>
      <Rule />
      <MenuItem icon={EditTextIcon} text="Edit Te_xt" />
      <MenuItem icon={EditPointsIcon} text="_Edit Points" />
      <Rule />
      <MenuItem icon={GroupIcon} text="_Group" off sub />
      <MenuItem icon={<Steps mid />} text="Bring to F_ront" sub split />
      <div className="relative">
        <MenuItem icon={<Steps mid={false} />} text="Send to Bac_k" on sub />
        <div role="menu" aria-label="Send to Back" className="absolute top-px left-[248px] w-[213px] border border-[#b5b7be] bg-white p-0.5 pt-px shadow-[2px_2px_4px_#6b6d78]">
          <MenuItem icon={<Steps mid={false} />} text="Send to Bac_k" on />
          <MenuItem icon={<Stack flip back="#a9a9bd" />} text="Send _Backward" />
        </div>
      </div>
      <Rule />
      <MenuItem icon={LinkIcon} text="_Hyperlink..." />
      <Rule />
      <MenuItem text="_Save as Picture..." />
      <Rule />
      <MenuItem text="Set as _Default Shape" />
      <MenuItem icon={SizeIcon} text="Si_ze and Position..." />
      <MenuItem icon={FormatShapeIcon} text="F_ormat Shape..." />
    </div>
  );
}

/* ---------- slide canvas ---------- */

const handles = [
  "-top-2 -left-2 rounded-full",
  "-top-2 left-[182px]",
  "-top-2 -right-2 rounded-full",
  "-bottom-2 -left-2 rounded-full",
  "-bottom-2 left-[182px]",
  "-right-2 -bottom-2 rounded-full",
];

function Slide() {
  return (
    <div className="relative h-[832px] w-[1108px] shrink-0 bg-white shadow-[0_0_12px_3px_#85868f]">
      <div className="absolute top-[259px] left-[84px] h-[181px] w-[940px] border border-dotted border-[#222]">
        <p className="pt-12 pl-[246px] font-[Lato,sans-serif] text-[61px] leading-[76px] whitespace-nowrap text-black [font-variant-ligatures:none]">Click to add tit</p>
      </div>
      <div className="absolute top-[471px] left-[167px] h-[215px] w-[774px] border border-dotted border-[#222]">
        <p className="pt-2 pl-[188px] font-[Lato,sans-serif] text-[45px] leading-[54px] whitespace-nowrap text-[#8f8f8f] [font-variant-ligatures:none]">Click to add subtitl</p>
      </div>
      <div className="absolute inset-y-0 right-0 w-[380px] border-2 border-[#3d6896] bg-[#4f81bd]">
        <span className="absolute bottom-full left-[188px] h-5 w-px bg-[#5b6f88]" />
        {handles.map((h) => (
          <span key={h} className={`absolute size-3 border border-[#6f8da0] bg-[#e9f7fb] ${h}`} />
        ))}
      </div>
      <MiniToolbar />
      <ContextMenu />
      <div className="pointer-events-none absolute inset-0 z-30 font-[Lato,sans-serif] text-[49px] leading-[58px] font-bold whitespace-nowrap text-black">
        <p className="absolute top-[70px] left-[82px]">RIGHT-CLICK THE RECTANGLE</p>
        <p className="absolute top-[380px] -left-[332px]">SEND THE IMAGE BACK TO MAKE IT A BACKGROUND</p>
        <svg width="1108" height="832" viewBox="0 0 1108 832" aria-hidden="true" className="absolute inset-0 overflow-visible">
          <g fill="none" stroke="#000" strokeWidth="8" strokeLinecap="round">
            <path d="M555 144L893 219M592 451L882 551" />
            <circle cx="918" cy="230" r="25" />
            <ellipse cx="1142" cy="556" rx="257" ry="96" />
          </g>
        </svg>
      </div>
    </div>
  );
}

function Scroll({ up, color = "#5d6068", w = 14 }: { up?: boolean; color?: string; w?: number }) {
  return (
    <svg width={w} height={w === 14 ? 8 : 7} viewBox="0 0 14 8" preserveAspectRatio="none" aria-hidden="true">
      <path d={up ? "M0 8h14L7 0z" : "M0 0h14L7 8z"} fill={color} />
    </svg>
  );
}

function CanvasScrollbar() {
  return (
    <div className="flex w-[23px] shrink-0 flex-col items-center bg-[#dce2ea] pb-6">
      <button type="button" aria-label="Scroll up" className="flex h-16 w-full justify-center pt-3"><Scroll up /></button>
      <div className="flex w-[21px] flex-1 flex-col items-center justify-center gap-0.5 border border-[#8b95a3] bg-linear-to-r from-[#f6f7fb] to-[#d9dde8]">
        <span className="h-px w-3 bg-[#8b8f99]" />
        <span className="h-px w-3 bg-[#8b8f99]" />
        <span className="h-px w-3 bg-[#8b8f99]" />
      </div>
      <button type="button" aria-label="Scroll down" className="flex h-7 w-full items-center justify-center border-b border-[#b9bec8]"><Scroll /></button>
      <button type="button" aria-label="Previous slide" className="flex h-6 flex-col items-center justify-center"><Scroll up color="#111" w={11} /><Scroll up color="#111" w={11} /></button>
      <button type="button" aria-label="Next slide" className="flex h-5 flex-col items-center justify-center"><Scroll color="#111" w={11} /><Scroll color="#111" w={11} /></button>
    </div>
  );
}

function Workspace() {
  return (
    <div className="flex bg-[#cbccd2]">
      <SlidesPane />
      <div className="w-[5px] shrink-0 bg-[#f1f2f6]" />
      <main className="flex min-w-0 flex-1 flex-col border-l border-[#8f9198]">
        <div className="flex">
          <div className="flex flex-1 justify-center bg-linear-to-b from-[#cdcfd3] via-[#c8c8d0] to-[#b9bac3] pt-[27px] pb-[21px]">
            <Slide />
          </div>
          <CanvasScrollbar />
        </div>
        <div className="h-2.5 border-y border-[#8f9198] bg-[#f1f2f7]" />
        <div className="flex h-14 bg-white">
          <textarea aria-label="Notes" defaultValue="Click to add notes" className="flex-1 resize-none overflow-hidden px-4 pt-1.5 text-[23px] leading-8 text-[#2c2a2e] outline-none" />
          <div className="flex w-[23px] flex-col items-center justify-between bg-[#dde1e9] py-2">
            <button type="button" aria-label="Scroll notes up"><Scroll up color="#8e929b" /></button>
            <button type="button" aria-label="Scroll notes down"><Scroll color="#8e929b" /></button>
          </div>
        </div>
      </main>
    </div>
  );
}

/* ---------- status bar ---------- */

function StatusBar() {
  return (
    <footer className="flex h-[35px] items-center border-t border-[#a7a9af] bg-linear-to-b from-[#e4e6eb] to-[#bfc2c9] text-base text-[#5b595f]">
      <span className="w-[115px] pl-3">Slide 1 of 1</span>
      <span className="flex h-7 w-36 items-center justify-center border-x border-[#a0a2a9]">"Office Theme"</span>
      <button type="button" aria-label="Spelling" className="flex h-7 w-[54px] items-center justify-center border-r border-[#a0a2a9]">
        <Icon w={26} h={24}>
          <path d="M1 14c1-5 6-4 8-1 3-5 12-5 15 0 0 6-8 10-13 10S1 19 1 14z" fill="#dfe7f8" stroke="#6f83b4" strokeWidth="1.500" />
          <path d="M3 18c4 5 14 6 20-1-2 6-8 7-12 7s-7-3-8-6z" fill="#4d68a8" />
          <path d="M7 11l5 6L24 1" fill="none" stroke="#5b76ae" strokeWidth="3" />
        </Icon>
      </button>
      <div className="ml-auto flex h-full items-center border-l border-[#a0a2a9] pl-1.5">
        <button type="button" aria-label="Normal view" className="flex h-[30px] w-7 items-center justify-center rounded-sm border-2 border-[#dfb63c] bg-[#fbe27c]">
          <Icon w={19} h={16}>
            <path d="M1 1h17v14H1zM9 1v14M9 8h9" fill="#fff" stroke="#5d5a4d" strokeWidth="1.500" />
          </Icon>
        </button>
        <button type="button" aria-label="Slide sorter" className="ml-1.5">
          <Icon w={18} h={17}>
            <path d="M1 2h6v5H1zM11 2h6v5h-6zM1 11h6v5H1zM11 11h6v5h-6z" fill="#f3f4f6" stroke="#5b5d62" strokeWidth="1.5" />
          </Icon>
        </button>
        <button type="button" aria-label="Reading view" className="ml-2">
          <Icon w={20} h={18}>
            <path d="M1 2c3-1 6-1 9 1 3-2 6-2 9-1v13c-3-1-6-1-9 2-3-3-6-3-9-2zM10 3v13M3 6h4M3 9h4M3 12h4M13 6h4M13 9h4M13 12h4" fill="#f3f4f6" stroke="#5b5d62" strokeWidth="1.500" />
          </Icon>
        </button>
        <button type="button" aria-label="Slide show" className="ml-2.5">
          <Icon w={19} h={18}>
            <path d="M1 1h17v2H1zM3 3v8h13V3M6 7h7M9.500 11v4M5 17l4.500-3 4.500 3" fill="#f3f4f6" stroke="#5b5d62" strokeWidth="1.500" />
          </Icon>
        </button>
        <span className="ml-[18px] w-[46px]">75%</span>
        <button type="button" aria-label="Zoom out" className="flex size-6 items-center justify-center rounded-full border border-[#777a80] bg-[#f4f5f7]">
          <span className="h-0.5 w-3 bg-[#55575c]" />
        </button>
        <input
          type="range"
          aria-label="Zoom"
          defaultValue={36}
          className="h-5 w-[154px] appearance-none bg-[linear-gradient(#85888f,#85888f)] bg-size-[100%_1px] bg-center bg-no-repeat [&::-webkit-slider-thumb]:h-5 [&::-webkit-slider-thumb]:w-3.5 [&::-webkit-slider-thumb]:appearance-none [&::-webkit-slider-thumb]:rounded-b-full [&::-webkit-slider-thumb]:border [&::-webkit-slider-thumb]:border-[#6d7076] [&::-webkit-slider-thumb]:bg-[#f5f6f8]"
        />
        <button type="button" aria-label="Zoom in" className="flex size-6 items-center justify-center rounded-full border border-[#777a80] bg-[#f4f5f7]">
          <Icon w={12} h={12}><path d="M0 6h12M6 0v12" stroke="#55575c" strokeWidth="2.500" /></Icon>
        </button>
        <button type="button" aria-label="Fit slide to window" className="mr-2 ml-3">
          <Icon w={24} h={24}>
            <rect x="1" y="1" width="22" height="22" rx="2" fill="#eceef1" stroke="#6a6c72" strokeWidth="1.500" />
            <path d="M12 9V4l-2 3M12 4l2 3M12 15v5l-2-3M12 20l2-3M9 12H4l3-2M4 12l3 2M15 12h5l-3-2M20 12l-3 2" fill="none" stroke="#4a4c51" />
            <path d="M4 6V4h2M18 4h2v2M4 18v2h2M18 20h2v-2" fill="none" stroke="#4a4c51" />
          </Icon>
        </button>
      </div>
    </footer>
  );
}

/* ---------- taskbar ---------- */

function TaskButton({ icon, text, on }: { icon: React.ReactNode; text: string; on?: boolean }) {
  return (
    <button
      type="button"
      className={`flex h-[33px] w-[246px] shrink-0 items-center gap-1 border-2 pl-1 whitespace-nowrap ${on ? "border-t-[#55534f] border-r-white border-b-white border-l-[#55534f] bg-[#ebe8e2] font-bold" : "border-t-white border-r-[#66635e] border-b-[#66635e] border-l-white bg-[#d6d2ca]"}`}
    >
      {icon}
      {text}
    </button>
  );
}

const RealtekIcon = (
  <Icon w={25} h={26}>
    <path d="M6 8c0-8 13-8 13 0" fill="none" stroke="#d5202c" strokeWidth="2.500" />
    <circle cx="12.500" cy="9" r="4" fill="#fff" stroke="#d5202c" strokeWidth="2" />
    <path d="M2 2v6l6 6M23 2v6l-6 6" fill="none" stroke="#1c2bd0" strokeWidth="3" />
    <path d="M8 14h9v5l4 1c5 1 4 6-1 5l-6-2h-3l-6 2c-5 1-6-4-1-5l4-1z" fill="#1c2bd0" />
    <path d="M10 18h5M5 23h2M18 23h2" stroke="#d5d5ee" strokeWidth="1.500" />
  </Icon>
);
const DiskIcon = (
  <Icon w={24} h={16}>
    <path d="M1 6l9-5 13 3v6l-10 5L1 11z" fill="#6c6a6a" />
    <path d="M1 6l9-5 13 3-10 6z" fill="#e6e6e6" stroke="#8b8989" />
    <path d="M14 12l6-3" stroke="#d5d5d5" strokeWidth="2" />
  </Icon>
);
const PaintIcon = (
  <Icon w={26} h={25}>
    <path d="M5 11L4 3" stroke="#5a4a3c" strokeWidth="4" />
    <path d="M11 12l-1-8" stroke="#4aa848" strokeWidth="3" />
    <path d="M15 12l3-9" stroke="#d03a2a" strokeWidth="3" />
    <path d="M5 10h15l-2 12c-3 3-8 3-11 0z" fill="#d8c9ae" stroke="#8d8473" />
    <path d="M12 11v10M17 11l-3 11" stroke="#d96a2e" strokeWidth="2" />
    <path d="M8 11l4 11" stroke="#4a9b48" strokeWidth="2" />
  </Icon>
);

const trayIcons: [string, React.ReactNode][] = [
  ["Safely remove hardware", <Icon w={24} h={24}><path d="M4 14l12-5 7 7-11 7z" fill="#8f9296" stroke="#55585c" /><path d="M10 20l9-6" stroke="#d9dbde" strokeWidth="2" /><path d="M1 8l6-7v4c6 0 9 3 9 8-3-3-5-3-9-3v4z" fill="#3fae49" stroke="#247a2d" /></Icon>],
  ["Messenger", <Icon w={24} h={24}><path d="M3 2c6-3 19 3 18 11l2 7c-3 4-16 3-17-7C1 11 0 5 3 2z" fill="#7fb919" /><path d="M7 12l4 4 7-8" fill="none" stroke="#fff" strokeWidth="3" /></Icon>],
  ["Updates", <Icon w={24} h={26}><path d="M2 13l3-3-3-3 5 1 2-4 1 5M2 18l4-1-2 6 5-2 2 4 2-4 5 2-2-5" fill="#fff" stroke="#8b8b8b" strokeWidth="1.500" /><circle cx="15" cy="9" r="7.500" fill="#e4f2e4" stroke="#4e9c52" strokeWidth="2" /><path d="M11 9l3 3 5-6" fill="none" stroke="#2f8a36" strokeWidth="2.500" /></Icon>],
  ["Wireless signal", <Icon w={25} h={24}><path d="M1 18h4v6H1zM6 15h4v9H6zM11 10h4v14h-4zM16 6h4v18h-4zM21 0h4v24h-4z" fill="#14b428" stroke="#0a4a12" /></Icon>],
  ["Security alert", <Icon w={22} h={24}><path d="M11 1l9 3c1 9-1 15-9 19C3 19 1 13 2 4z" fill="#f6e21f" stroke="#6d6b62" strokeWidth="2" /><path d="M11 6v8M11 16v3" stroke="#111" strokeWidth="2.500" /></Icon>],
  ["Scheduler", <Icon w={26} h={24}><circle cx="11" cy="11" r="10" fill="#f49a1f" /><circle cx="9" cy="9" r="6" fill="#fbd16a" /><path d="M15 12h4v11h-4zM21 12h4v11h-4z" fill="#3f6fc4" stroke="#dce6f8" /></Icon>],
  ["Shield", <Icon w={20} h={24}><path d="M1 1h18v13c0 5-5 8-9 9-4-1-9-4-9-9z" fill="#b9492f" stroke="#5e3a28" strokeWidth="1.500" /><path d="M5 4h11v9c0 3-3 5-6 6-3-1-5-3-5-6z" fill="#f18a6d" /></Icon>],
  ["Network", <Icon w={24} h={24}><path d="M1 3h12v11H1z" fill="#1f2f85" stroke="#6d7395" /><path d="M3 16h9l2 5H2z" fill="#b9bccd" stroke="#585c78" /><path d="M15 5c3 3 3 6 0 9M18 2c5 5 4 10 0 14" fill="none" stroke="#777a88" strokeWidth="1.500" /></Icon>],
  ["Backup", <Icon w={24} h={24}><path d="M3 2h17l4 20H5z" fill="#1d6fc4" stroke="#143f7c" /><path d="M1 3l4 19 2 1L4 3z" fill="#0f2f63" /><circle cx="13" cy="11" r="4" fill="none" stroke="#a8d3f7" strokeWidth="1.500" strokeDasharray="2 2" /></Icon>],
  ["Antivirus", <Icon w={24} h={24}><rect width="24" height="24" rx="2" fill="#d0142a" /><path d="M4 14C4 4 14 2 20 9" fill="none" stroke="#fff" strokeWidth="3" /><path d="M20 9c-5-1-7 0-9 3l5 7c1 1 3 1 4-1M11 12c-3-1-5 0-7 2" fill="none" stroke="#fff" strokeWidth="2" /></Icon>],
  ["Local area connection", <Icon w={26} h={24}><path d="M9 1h11v10H9z" fill="#26349a" stroke="#5b608a" /><path d="M1 8h11v10H1z" fill="#2c3b8e" stroke="#5b608a" /><path d="M3 19h8v3H3z" fill="#8f93ab" /><path d="M13 12l11 11M24 12L13 23" stroke="#e0242c" strokeWidth="3.500" /></Icon>],
];

function Taskbar() {
  return (
    <div className="flex h-[42px] items-center gap-[5px] border-t-2 border-[#f5f3ee] bg-[#d5d0c8] pr-1 pl-px font-['DejaVu_Sans_Condensed','DejaVu_Sans',sans-serif] text-[17px] text-black">
      <button type="button" className="flex h-[33px] w-[81px] shrink-0 items-center gap-1 border-2 border-t-white border-r-[#55534f] border-b-[#55534f] border-l-white pl-0.5 font-bold">
        <Icon w={24} h={22}>
          <path d="M3 3c3-2 6-2 8 0L9 10c-3-2-5-2-8 0z" fill="#e2552c" />
          <path d="M13 4c3 2 6 2 9 0l-2 7c-3 2-6 2-9 0z" fill="#6fb52c" />
          <path d="M2 12c2-2 5-2 7 0l-2 7c-2-2-4-2-7 0z" fill="#3f74cf" />
          <path d="M11 13c3 2 6 2 9 0l-2 7c-3 2-6 2-9 0z" fill="#efc02a" />
        </Icon>
        Start
      </button>
      <span className="mx-1 h-7 w-1 shrink-0 border-r-2 border-l border-r-[#8d8a84] border-l-white" />
      <TaskButton icon={RealtekIcon} text="REALTEK RTL8187 Wirel..." />
      <TaskButton icon={<PowerPointIcon />} text="Presentation2 - Micro..." on />
      <TaskButton icon={DiskIcon} text="Local Disk (H:)" />
      <TaskButton icon={PaintIcon} text="MASTER SLIDE ADDING ..." />
      <div className="ml-auto flex h-[34px] items-center border-2 border-t-[#8b8882] border-r-white border-b-white border-l-[#8b8882] pr-3.5 pl-1.5">
        <button type="button" aria-label="Show hidden icons" className="mr-2">
          <Icon w={13} h={10}><path d="M6 1L2 5l4 4M12 1L8 5l4 4" fill="none" stroke="#111" strokeWidth="2.500" /></Icon>
        </button>
        <div className="flex gap-[3px]">
          {trayIcons.map(([label, icon]) => (
            <button key={label} type="button" aria-label={label} className="flex w-[25px] items-center justify-center">{icon}</button>
          ))}
        </div>
        <time className="ml-3 whitespace-nowrap">7:23 AM</time>
      </div>
    </div>
  );
}

export default function App() {
  return (
    <div className="min-h-screen bg-linear-to-b from-[#ffeed0] via-[#fdecce] via-75% to-[#d8cfa8] to-98% pt-68 pr-[50px] pl-8 font-['Noto_Sans','Open_Sans',sans-serif] text-[17px]">
      <div className="overflow-hidden">
        <TitleBar />
        <Tabs />
        <Ribbon />
        <Workspace />
        <StatusBar />
        <Taskbar />
      </div>
    </div>
  );
}
